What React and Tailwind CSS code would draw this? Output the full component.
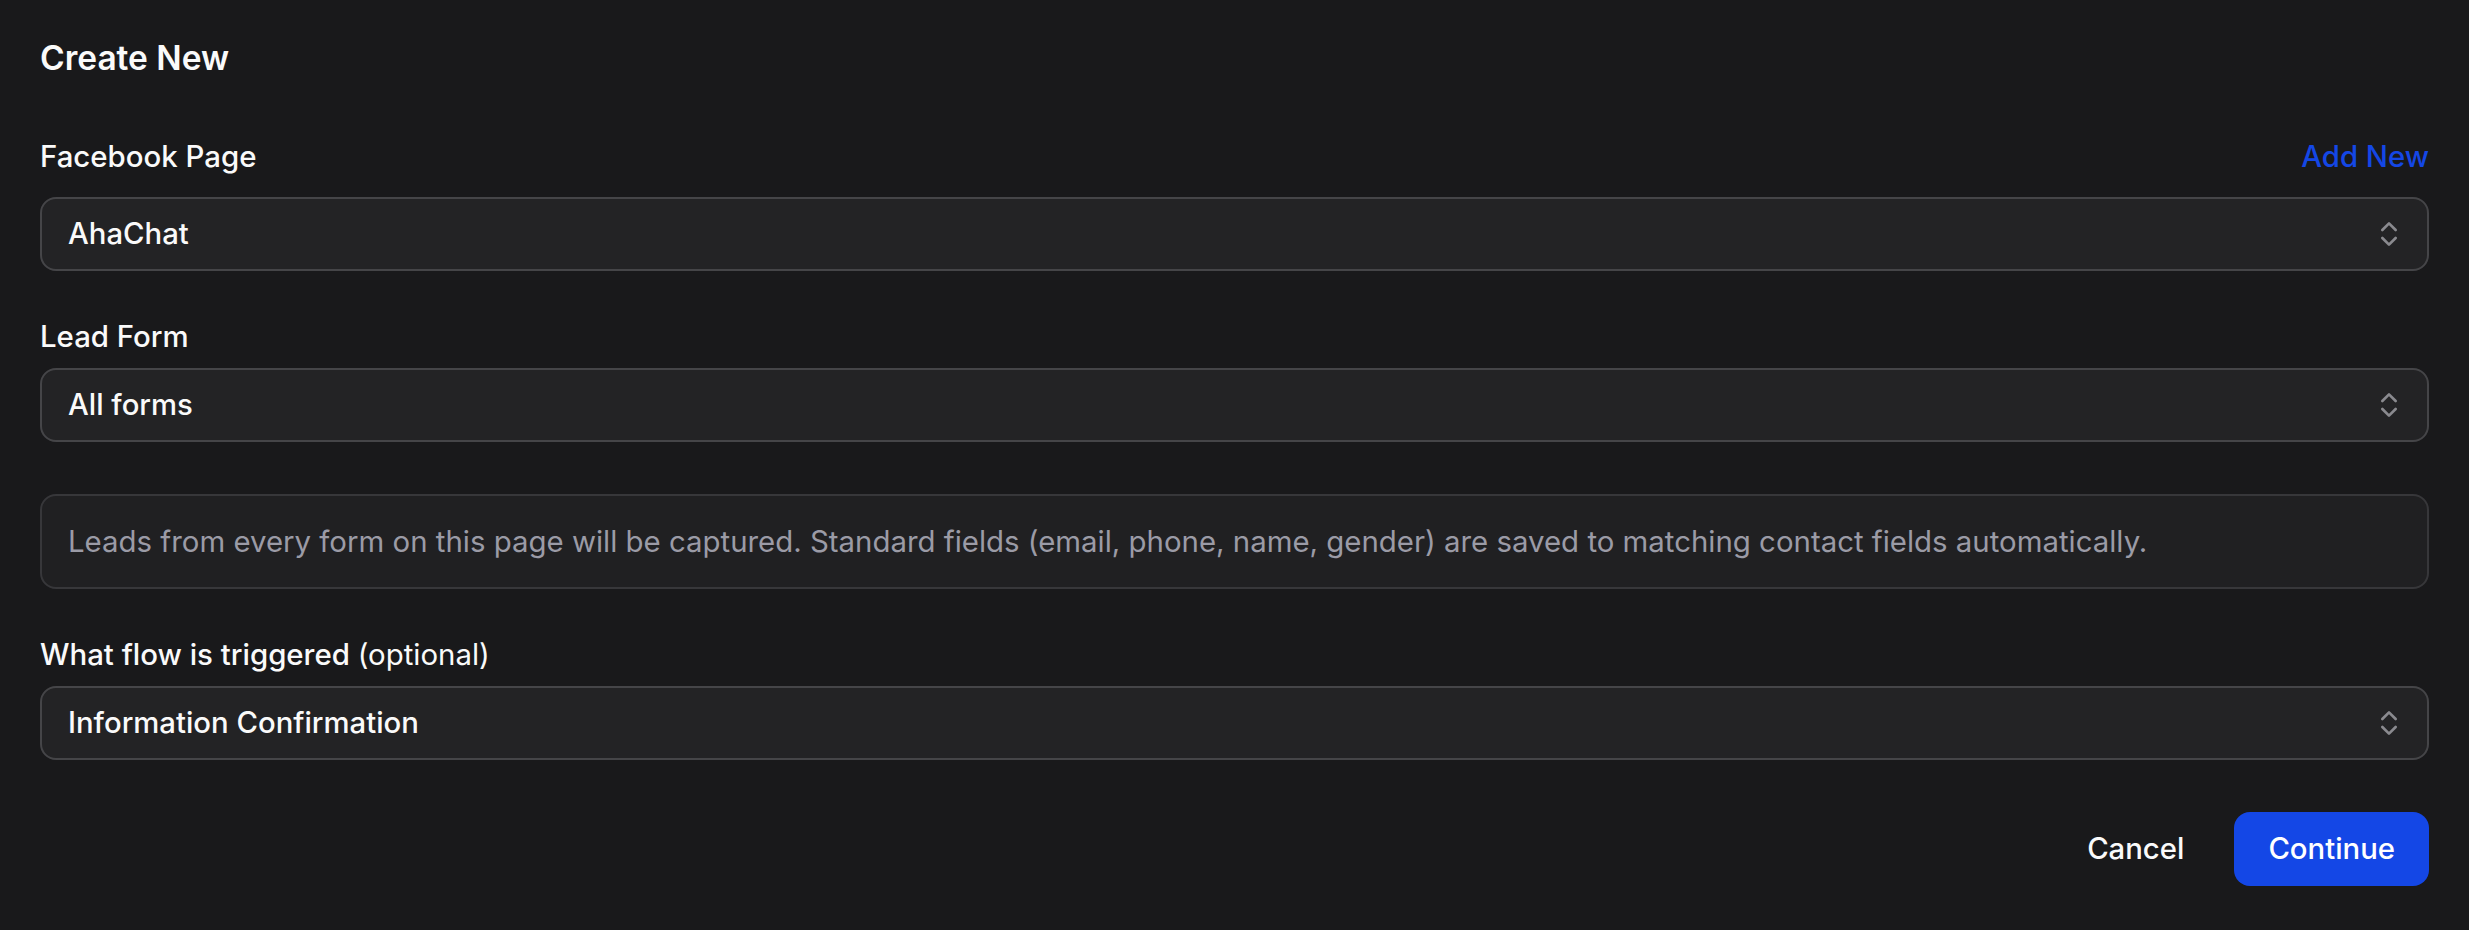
import { ChevronsUpDown } from 'lucide-react';

function SelectBox({ value }) {
  return (
    <button
      type="button"
      className="w-full h-[74px] flex items-center justify-between rounded-[16px] border-2 border-[#454548] bg-[#232325] pl-[26px] pr-[22px] text-left"
    >
      <span className="text-[29.3px] leading-[40px] font-medium text-[#fafafa]">{value}</span>
      <ChevronsUpDown size={32} strokeWidth={2} className="text-[#8a8a8f]" />
    </button>
  );
}

export default function App() {
  return (
    <div className="min-h-screen bg-[#19191b] px-[40px] pt-[36px] pb-[40px] font-['Inter',sans-serif] text-[#fafafa]">
      <h2 className="text-[33.5px] leading-[44px] font-semibold">Create New</h2>

      {/* Facebook page */}
      <div className="mt-[57px]">
        <div className="flex items-center justify-between h-[40px] mb-[20px]">
          <label className="text-[29.4px] leading-[40px] font-medium">Facebook Page</label>
          <button type="button" className="text-[29.3px] leading-[40px] font-medium text-blue-700">
            Add New
          </button>
        </div>
        <SelectBox value="AhaChat" />
      </div>

      {/* Lead form */}
      <div className="mt-[46px]">
        <label className="block text-[29.4px] leading-[40px] font-medium mb-[11px]">Lead Form</label>
        <SelectBox value="All forms" />
      </div>

      <div className="mt-[52px] h-[95px] flex items-center rounded-[16px] border-2 border-[#37373a] bg-[#202022] px-[26px]">
        <p className="text-[29.4px] leading-[40px] text-[#9b9ba6]">
          Leads from every form on this page will be captured. Standard fields (email, phone, name, gender) are saved to matching contact fields automatically.
        </p>
      </div>

      {/* Flow */}
      <div className="mt-[46px]">
        <label className="block text-[29.4px] leading-[40px] font-medium mb-[11px]">
          What flow is triggered <span className="font-normal">(optional)</span>
        </label>
        <SelectBox value="Information Confirmation" />
      </div>

      <div className="mt-[52px] flex justify-end gap-[16px]">
        <button type="button" className="h-[74px] px-[34px] rounded-[16px] text-[29.3px] font-medium text-[#fafafa]">
          Cancel
        </button>
        <button type="button" className="h-[74px] px-[34px] rounded-[16px] bg-blue-700 text-[29.3px] font-medium text-white">
          Continue
        </button>
      </div>
    </div>
  );
}
